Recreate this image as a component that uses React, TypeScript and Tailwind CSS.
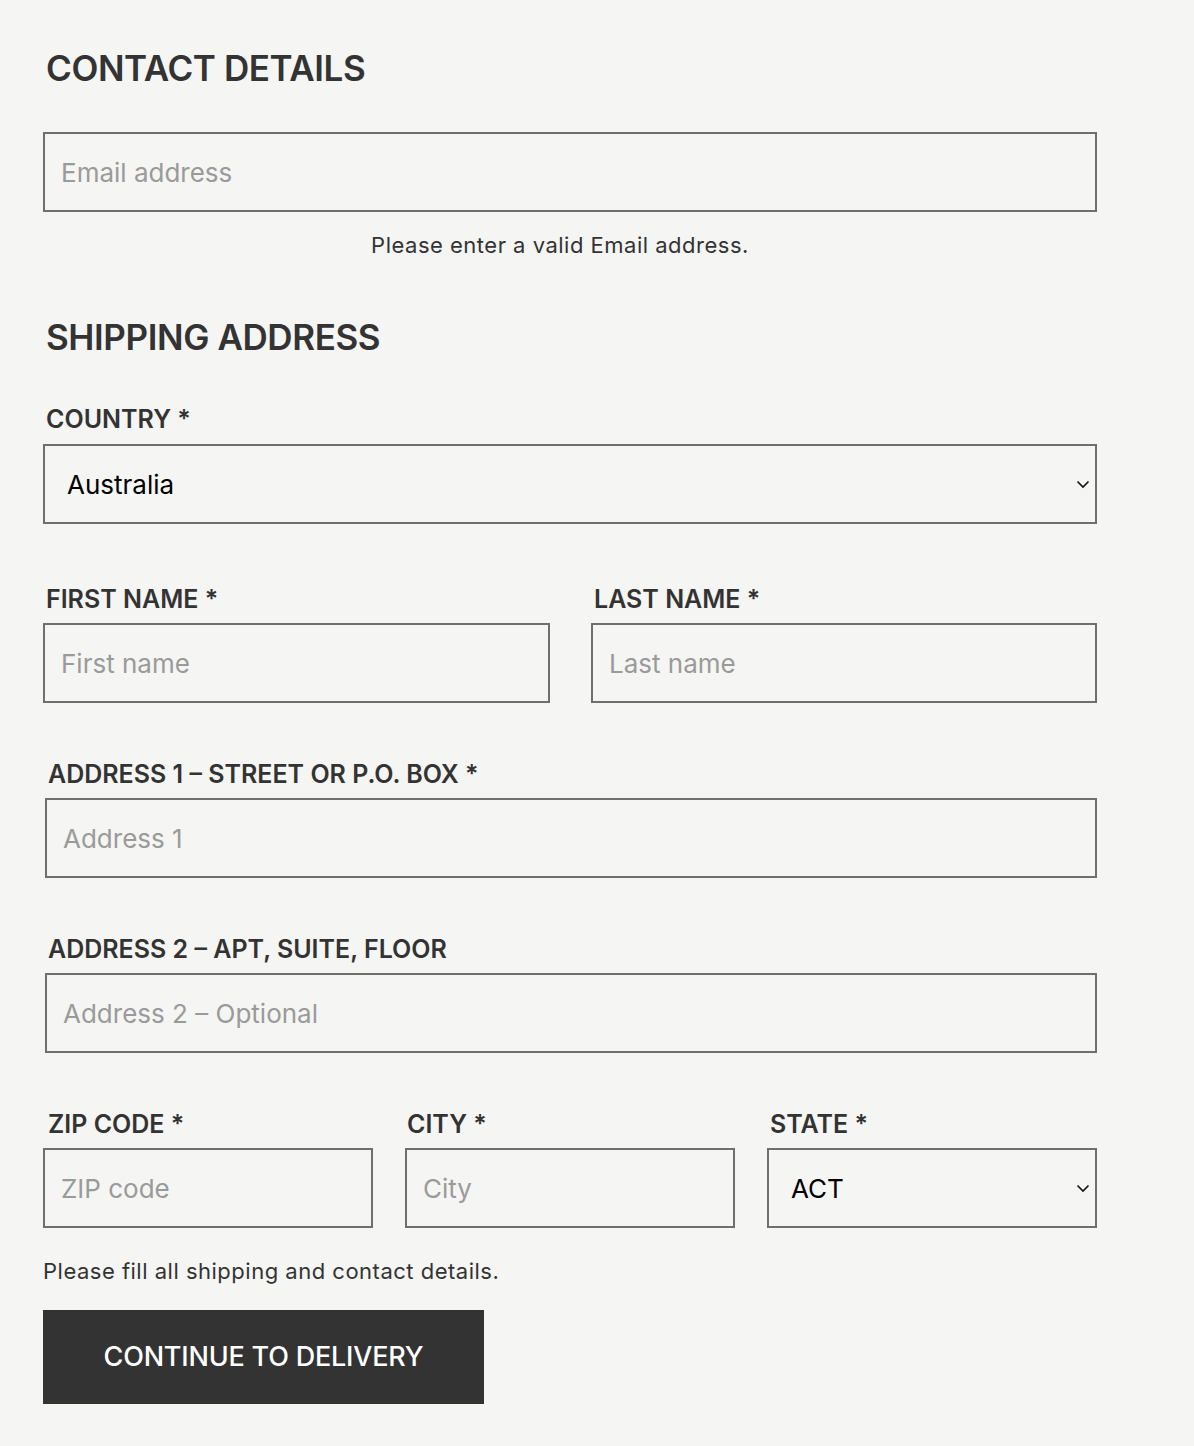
import React from "react";

const font = { fontFamily: "Inter, 'Noto Sans', sans-serif" };

function Label({ children, className = "" }: { children: React.ReactNode; className?: string }) {
  return (
    <div className={`text-[25px] leading-[30px] font-semibold text-[#333] tracking-[0px] ${className}`}>{children}</div>
  );
}

function Input({ placeholder, className = "" }: { placeholder: string; className?: string }) {
  return (
    <input
      placeholder={placeholder}
      className={`h-[80px] border-2 border-[#6f6f6f] bg-transparent px-[16px] text-[26px] text-[#333] placeholder:text-[#9a9a9a] outline-none ${className}`}
      style={font}
    />
  );
}

function Select({ value, className = "" }: { value: string; className?: string }) {
  return (
    <div className={`relative h-[80px] border-2 border-[#6f6f6f] flex items-center ${className}`}>
      <span className="pl-[22px] text-[26px] text-black">{value}</span>
      <svg
        className="absolute right-[4px] top-1/2 -translate-y-1/2"
        width="16"
        height="10"
        viewBox="0 0 16 10"
        fill="none"
      >
        <path d="M2.5 2.5 L8 8 L13.5 2.5" stroke="#111" strokeWidth="1.6" />
      </svg>
    </div>
  );
}

export default function App() {
  return (
    <div className="min-h-[1446px] w-full bg-[#f5f5f3] text-[#333]" style={font}>
      <div className="pl-[43px] w-[1097px] flex flex-col">
        <h1 className="ml-[3px] mt-[46px] text-[35px] leading-[44px] font-semibold tracking-[-0.4px]">CONTACT DETAILS</h1>
        <Input placeholder="Email address" className="mt-[42px] w-[1054px]" />
        <div className="mt-[19px] w-[1034px] text-center text-[22px] leading-[28px] tracking-[0.5px] text-[#333]">
          Please enter a valid Email address.
        </div>
        <h2 className="ml-[3px] mt-[56px] text-[35px] leading-[44px] font-semibold tracking-[-0.4px]">SHIPPING ADDRESS</h2>
        <Label className="ml-[3px] mt-[45px]">COUNTRY *</Label>
        <Select value="Australia" className="mt-[10px] w-[1054px]" />

        <div className="mt-[60px] flex gap-[41px]">
          <div className="flex flex-col">
            <Label className="ml-[3px]">FIRST NAME *</Label>
            <Input placeholder="First name" className="mt-[9px] w-[507px]" />
          </div>
          <div className="flex flex-col">
            <Label className="ml-[3px]">LAST NAME *</Label>
            <Input placeholder="Last name" className="mt-[9px] w-[506px]" />
          </div>
        </div>

        <div className="mt-[56px] ml-[2px] flex flex-col">
          <Label className="ml-[3px]">ADDRESS 1 – STREET OR P.O. BOX *</Label>
          <Input placeholder="Address 1" className="mt-[9px] w-[1052px]" />
        </div>

        <div className="mt-[56px] ml-[2px] flex flex-col">
          <Label className="ml-[3px]">ADDRESS 2 – APT, SUITE, FLOOR</Label>
          <Input placeholder="Address 2 – Optional" className="mt-[9px] w-[1052px]" />
        </div>

        <div className="mt-[56px] flex gap-[32px]">
          <div className="flex flex-col">
            <Label className="ml-[5px]">ZIP CODE *</Label>
            <Input placeholder="ZIP code" className="mt-[9px] w-[330px]" />
          </div>
          <div className="flex flex-col">
            <Label className="ml-[2px]">CITY *</Label>
            <Input placeholder="City" className="mt-[9px] w-[330px]" />
          </div>
          <div className="flex flex-col">
            <Label className="ml-[3px]">STATE *</Label>
            <Select value="ACT" className="mt-[9px] w-[330px]" />
          </div>
        </div>

        <div className="mt-[29px] text-[22px] leading-[28px] tracking-[0.5px] text-[#333]">Please fill all shipping and contact details.</div>
        <button className="mt-[25px] w-[441px] h-[94px] bg-[#333] text-white text-[27px] font-medium tracking-[-0.2px]">
          CONTINUE TO DELIVERY
        </button>
      </div>
    </div>
  );
}
